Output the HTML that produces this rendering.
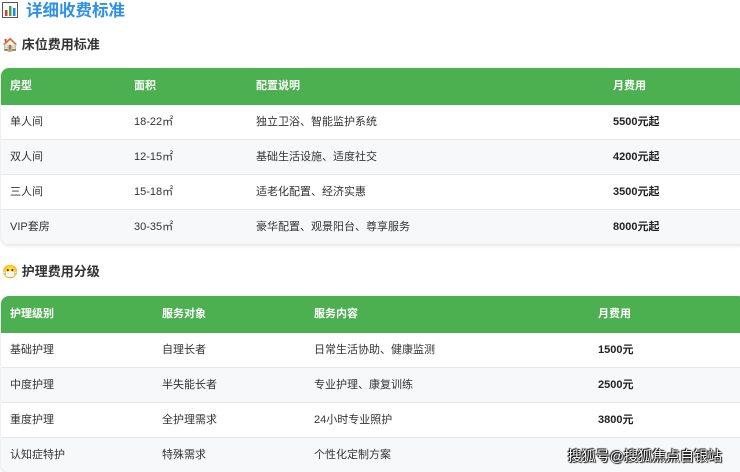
<!DOCTYPE html>
<html><head><meta charset="utf-8"><style>
body{margin:0;width:740px;height:472px;overflow:hidden;background:#fff;font-family:"Liberation Sans","Noto Sans CJK SC",sans-serif;color:#333;position:relative}
.t{position:absolute;left:2px;top:0;font-size:16.5px;font-weight:bold;color:#2e90e6;line-height:22px}
.h{position:absolute;left:2px;font-size:13px;font-weight:bold;color:#333;line-height:18px}
.tbl{position:absolute;left:1px;width:745px;border-radius:8px;overflow:hidden;box-shadow:0 1px 5px rgba(0,0,0,.15);font-size:11px}
.row{position:relative;height:34px;border-bottom:1px solid #e8e8e8;line-height:34px}
.row.g{background:#f7f8fa}
.hd{background:#4caf50;color:#fff;font-weight:bold;height:37px;line-height:37px;border:none}
.row span{position:absolute;top:0}
.b{font-weight:bold;color:#222}
.wm{position:absolute;right:18px;bottom:6px;font-size:14px;color:#fff;text-shadow:0 0 1px #000,0 0 1px #000,1px 1px 1px #000,-1px -1px 1px #000}
</style></head><body>
<div class="t"><svg width="16" height="16" viewBox="0 0 16 16" style="vertical-align:-2px;margin-right:8px"><rect x=".5" y=".5" width="15" height="15" fill="#fff" stroke="#555"/><rect x="3" y="8" width="2.5" height="6" fill="#e53935"/><rect x="7" y="4" width="2.5" height="10" fill="#43a047"/><rect x="11" y="6" width="2.5" height="8" fill="#1e88e5"/></svg>详细收费标准</div>
<div class="h" style="top:36px">🏠 床位费用标准</div>
<div class="tbl" style="top:68px">
<div class="row hd"><span style="left:9px">房型</span><span style="left:133px">面积</span><span style="left:255px">配置说明</span><span style="left:612px">月费用</span></div>
<div class="row"><span style="left:9px">单人间</span><span style="left:133px">18-22㎡</span><span style="left:255px">独立卫浴、智能监护系统</span><span class="b" style="left:612px">5500元起</span></div>
<div class="row g"><span style="left:9px">双人间</span><span style="left:133px">12-15㎡</span><span style="left:255px">基础生活设施、适度社交</span><span class="b" style="left:612px">4200元起</span></div>
<div class="row"><span style="left:9px">三人间</span><span style="left:133px">15-18㎡</span><span style="left:255px">适老化配置、经济实惠</span><span class="b" style="left:612px">3500元起</span></div>
<div class="row g" style="border:none"><span style="left:9px">VIP套房</span><span style="left:133px">30-35㎡</span><span style="left:255px">豪华配置、观景阳台、尊享服务</span><span class="b" style="left:612px">8000元起</span></div>
</div>
<div class="h" style="top:263px">😷 护理费用分级</div>
<div class="tbl" style="top:296px">
<div class="row hd"><span style="left:9px">护理级别</span><span style="left:161px">服务对象</span><span style="left:313px">服务内容</span><span style="left:597px">月费用</span></div>
<div class="row"><span style="left:9px">基础护理</span><span style="left:161px">自理长者</span><span style="left:313px">日常生活协助、健康监测</span><span class="b" style="left:597px">1500元</span></div>
<div class="row g"><span style="left:9px">中度护理</span><span style="left:161px">半失能长者</span><span style="left:313px">专业护理、康复训练</span><span class="b" style="left:597px">2500元</span></div>
<div class="row"><span style="left:9px">重度护理</span><span style="left:161px">全护理需求</span><span style="left:313px">24小时专业照护</span><span class="b" style="left:597px">3800元</span></div>
<div class="row g" style="border:none"><span style="left:9px">认知症特护</span><span style="left:161px">特殊需求</span><span style="left:313px">个性化定制方案</span></div>
</div>
<div class="wm">搜狐号@搜狐焦点自银站</div>
</body></html>
